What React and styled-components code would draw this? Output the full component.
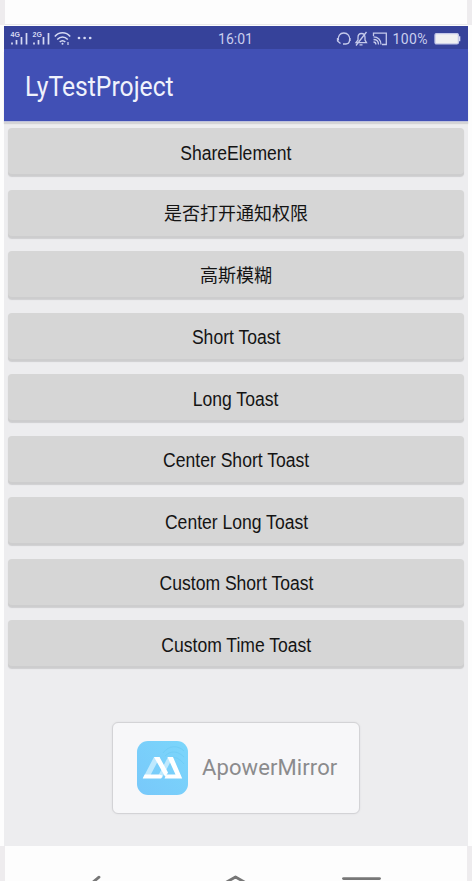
import React from "react";
import styled, { createGlobalStyle } from "styled-components";

const GlobalStyle = createGlobalStyle`
  * {
    box-sizing: border-box;
  }
  body {
    margin: 0;
    background: #fdfdfd;
    font-family: "Liberation Sans", "Noto Sans CJK SC", sans-serif;
  }
`;

const Page = styled.div`
  display: flex;
  flex-direction: column;
  width: 472px;
  height: 881px;
  overflow: hidden;
`;

const TopEdge = styled.div`
  height: 26px;
  flex: none;
  display: flex;
`;

const EdgeSide = styled.div`
  width: 5px;
  height: ${({ $height }) => $height};
  background: #eeecee;
`;

const EdgeCenter = styled.div`
  flex: 1;
  height: 25px;
  border-bottom: 1px solid #e9e9e9;
`;

const Screen = styled.div`
  display: flex;
  flex-direction: column;
  height: 820px;
  flex: none;
  margin: 0 4px;
  background: #ededef;
`;

const StatusBar = styled.div`
  display: grid;
  grid-template-columns: 1fr auto 1fr;
  align-items: center;
  height: 23px;
  padding: 1px 7px 0 6px;
  background: #36429a;
  color: #c9ceee;
`;

const StatusGroup = styled.div`
  display: flex;
  align-items: center;
  justify-content: ${({ $end }) => ($end ? "flex-end" : "flex-start")};
`;

const StatusText = styled.span`
  font-family: Roboto, sans-serif;
  font-size: 14px;
  font-weight: 400;
  line-height: 22px;
  letter-spacing: ${({ $spacing }) => $spacing || "0"};
  margin: ${({ $margin }) => $margin || "0"};
  padding-top: 1px;
`;

const AppBar = styled.div`
  display: flex;
  align-items: center;
  height: 72px;
  flex: none;
  padding: 4px 21px 0;
  background: #4150b5;
  box-shadow: 0 1px 0 #bfc2dc, 0 3px 1px #d4d4d6;
`;

const Title = styled.div`
  font-family: Roboto, sans-serif;
  font-size: 27px;
  font-weight: 400;
  line-height: 32px;
  color: #f0f2fc;
  transform: scaleX(0.915);
  transform-origin: left;
`;

const ButtonList = styled.div`
  display: flex;
  flex-direction: column;
  gap: 13.5px;
  padding: 7px 4px 0;
`;

const Button = styled.button`
  height: 48px;
  padding: 1px 0 0;
  border: 0;
  border-radius: 4px;
  background: #d6d6d6;
  box-shadow: inset 0 -2px 0 #cdcdce, 0 1px 1px #cfcfd1;
  color: #141414;
  font-family: inherit;
  font-size: ${({ $cjk }) => ($cjk ? "18px" : "19.5px")};
  line-height: 26px;
`;

const Label = styled.span`
  display: inline-block;
  transform: scaleX(${({ $cjk }) => ($cjk ? 1 : 0.9)});
`;

const AppCard = styled.div`
  display: flex;
  align-items: center;
  align-self: center;
  width: 248px;
  height: 92px;
  margin-top: 54px;
  padding-left: 24px;
  border: 1px solid #d3d3d6;
  border-radius: 6px;
  background: #f7f7f9;
  box-shadow: 0 0 2px #dcdcdf;
`;

const AppName = styled.div`
  margin-left: 14px;
  padding-bottom: 2px;
  font-family: Roboto, sans-serif;
  font-size: 22px;
  font-weight: 400;
  letter-spacing: 0.1px;
  color: #8b8b8d;
`;

const BottomEdge = styled.div`
  display: flex;
  height: 35px;
  flex: none;
`;

const NavBar = styled.div`
  flex: 1;
  height: 35px;
`;

const BUTTONS = [
  { text: "ShareElement" },
  { text: "是否打开通知权限", cjk: true },
  { text: "高斯模糊", cjk: true },
  { text: "Short Toast" },
  { text: "Long Toast" },
  { text: "Center Short Toast" },
  { text: "Center Long Toast" },
  { text: "Custom Short Toast" },
  { text: "Custom Time Toast" },
];

const Signal = ({ label }) => (
  <svg width="22" height="16" viewBox="0 0 22 16">
    <text x="0.5" y="6" fontSize="7" fontWeight="700" fontFamily="Liberation Sans, sans-serif" fill="#d5d9f3">
      {label}
    </text>
    <path d="M2 11.5v2M6.5 9V13.5M11.5 6v7.5M16.5 2V13.5" stroke="#d5d9f3" strokeWidth="1.7" />
  </svg>
);

const WifiIcon = () => (
  <svg width="17" height="16" viewBox="0 0 17 16" fill="none" stroke="#d5d9f3" strokeWidth="1.5">
    <path d="M.8 5.5C5 .5 12 .5 16.2 5.5M3.2 8.5C6.5 5 10.5 5 13.8 8.5M5.7 11c1.8-1.7 3.8-1.7 5.6 0" />
    <circle cx="8.5" cy="12.8" r="1" fill="#d5d9f3" stroke="none" />
    <path d="M14 11v3" strokeWidth="1.2" />
  </svg>
);

const Dots = styled.svg`
  margin: 0 0 2px 6px;
`;

const DotsIcon = () => (
  <Dots width="16" height="4" viewBox="0 0 16 4" fill="#d5d9f3">
    <circle cx="2" cy="2" r="1.35" />
    <circle cx="7.6" cy="2" r="1.35" />
    <circle cx="13.2" cy="2" r="1.35" />
  </Dots>
);

const StatusIcons = () => (
  <svg width="52" height="16" viewBox="0 0 52 16" fill="none" stroke="#c5caeb" strokeWidth="1.3">
    <path d="M2.5 9.5C1.5 5 4 2 7.8 2s6.700 3.200 5.700 7.500V10c-.3 2-1.500 3-3.500 3H7" />
    <path d="M1.500 7v3l3 2.500M14 7v3" />
    <path d="M20 11.700h10.500L29 9V6.500C29 4 28 2.500 25.500 2.500S22 4 22 6.500V9zM23.500 13.800h3M20 14.500L30.500 1" />
    <path d="M37.500 5V2.200H50.300v11.300H46M37.500 5.800c4.500 0 7.500 3.200 7.500 7.700M37.500 8.500c3 0 5 2 5 5M37.500 11c1.500 0 2.400 1 2.400 2.500" />
  </svg>
);

const BatteryIcon = () => (
  <svg width="27" height="12" viewBox="0 0 27 12">
    <rect x="1" y=".6" width="23.4" height="10.300" rx="1.500" fill="#f0f0f2" stroke="#c3c7e8" strokeWidth="1.300" />
    <path d="M25 3.300h1.300v5H25z" fill="#d5d9f3" />
  </svg>
);

const Logo = () => (
  <svg width="51" height="54" viewBox="0 0 51 54">
    <defs>
      <linearGradient id="logoFill" x1="0" y1="1" x2="1" y2="0">
        <stop offset="0" stopColor="#78c8fa" />
        <stop offset="1" stopColor="#7bd6fb" />
      </linearGradient>
    </defs>
    <rect width="51" height="54" rx="11" fill="url(#logoFill)" />
    <path d="M26 12c6-8 15-8 21-2M28 15c6-6 13-5 19 1M33 17c5-2 10 1 14 6" fill="none" stroke="#70cdf6" strokeWidth="1" />
    <path d="M6 37L17 16h6L12 37zM20 37L31 16h5L25 37z" fill="#bfe9fe" />
    <path d="M17 16h5.500l8.500 15.500-2.700 4.500zM7.700 33.500H22l3.500 1-1.300 3H5.700z" fill="#fff" />
    <path d="M30.500 16H36l9.200 21.500H27.500l2-4h9z" fill="#fff" />
  </svg>
);

const NavIcons = () => (
  <svg width="462" height="35" viewBox="0 0 462 35" fill="none" stroke="#777" strokeWidth="2.800" strokeLinecap="round" strokeLinejoin="round">
    <path d="M94 31.200L82 41M219 37.500l11.500-6.500L242 37.500" />
    <path d="M338.500 32.600h36" />
  </svg>
);

const App = () => {
  return (
    <Page>
      <GlobalStyle />
      <TopEdge>
        <EdgeSide $height="25px" />
        <EdgeCenter />
        <EdgeSide $height="25px" />
      </TopEdge>
      <Screen>
        <StatusBar>
          <StatusGroup>
            <Signal label="4G" />
            <Signal label="2G" />
            <WifiIcon />
            <DotsIcon />
          </StatusGroup>
          <StatusText>16:01</StatusText>
          <StatusGroup $end>
            <StatusIcons />
            <StatusText $spacing="0.4px" $margin="0 6px 0 5px">100%</StatusText>
            <BatteryIcon />
          </StatusGroup>
        </StatusBar>
        <AppBar>
          <Title>LyTestProject</Title>
        </AppBar>
        <ButtonList>
          {BUTTONS.map((item, index) => (
            <Button key={index} $cjk={item.cjk}>
              <Label $cjk={item.cjk}>{item.text}</Label>
            </Button>
          ))}
        </ButtonList>
        <AppCard>
          <Logo />
          <AppName>ApowerMirror</AppName>
        </AppCard>
      </Screen>
      <BottomEdge>
        <EdgeSide $height="35px" />
        <NavBar>
          <NavIcons />
        </NavBar>
        <EdgeSide $height="35px" />
      </BottomEdge>
    </Page>
  );
};

export default App;
